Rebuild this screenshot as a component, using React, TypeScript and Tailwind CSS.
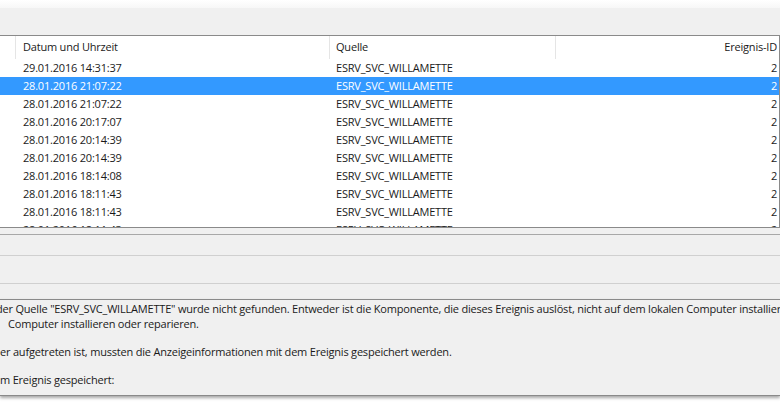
const rows = [
  '29.01.2016 14:31:37',
  '28.01.2016 21:07:22',
  '28.01.2016 21:07:22',
  '28.01.2016 20:17:07',
  '28.01.2016 20:14:39',
  '28.01.2016 20:14:39',
  '28.01.2016 18:14:08',
  '28.01.2016 18:11:43',
  '28.01.2016 18:11:43',
  '28.01.2016 18:11:43',
];

const SELECTED = 1;

export default function App() {
  return (
    <div className="w-[780px] h-[405px] overflow-hidden bg-white text-[11px] tracking-[-0.2px] text-[#1a1a1a] font-['Open_Sans',sans-serif]">
      {/* toolbar strip */}
      <div className="h-[8px] bg-gradient-to-b from-white to-[#f7f7f7]" />
      <div className="h-[27px] bg-[#f0f0f0]" />

      {/* event list */}
      <div className="border-t border-b border-r border-[#8a8a8a] bg-white">
        <div className="grid grid-cols-[16px_314px_226px_1fr] h-[23px] items-center">
          <div className="h-full border-r border-[#e5e5e5]" />
          <div className="h-full flex items-center pl-[7px] border-r border-[#e5e5e5]">Datum und Uhrzeit</div>
          <div className="h-full flex items-center pl-[6px] border-r border-[#e5e5e5]">Quelle</div>
          <div className="h-full flex items-center justify-end pr-[2px]">Ereignis-ID</div>
        </div>
        <div className="h-[168px] overflow-hidden">
          {rows.map((d, i) => {
            const sel = i === SELECTED;
            return (
              <div
                key={i}
                className={`grid grid-cols-[16px_314px_226px_1fr] h-[18px] items-center ${
                  sel ? 'bg-[#3399ff] text-white' : ''
                }`}
              >
                <div />
                <div className="pl-[7px]">{d}</div>
                <div className="pl-[6px]">ESRV_SVC_WILLAMETTE</div>
                <div className="text-right pr-[2px]">2</div>
              </div>
            );
          })}
        </div>
      </div>

      {/* tab / header bands */}
      <div className="h-[6px] bg-[#f0f0f0]" />
      <div className="h-[21px] bg-[#f0f0f0] border-t border-[#a8a8a8]" />
      <div className="h-[28px] bg-[#f0f0f0] border-t border-[#d0d0d0]" />
      <div className="h-[16px] bg-[#f0f0f0] border-t border-[#d0d0d0]" />

      {/* description */}
      <div className="h-[97px] bg-[#f0f0f0] border-t border-b border-[#8a8a8a] shadow-[0_2px_3px_rgba(0,0,0,0.35)] overflow-hidden whitespace-nowrap">
        <div className="h-[17px] leading-[17px] -ml-[4px]">
          der Quelle "ESRV_SVC_WILLAMETTE" wurde nicht gefunden. Entweder ist die Komponente, die dieses Ereignis auslöst, nicht auf dem lokalen Computer installiert, oder die Installation ist beschädigt.
        </div>
        <div className="h-[14px] leading-[14px] pl-[8px]">Computer installieren oder reparieren.</div>
        <div className="h-[14px]" />
        <div className="h-[14px] leading-[14px]">er aufgetreten ist, mussten die Anzeigeinformationen mit dem Ereignis gespeichert werden.</div>
        <div className="h-[14px]" />
        <div className="h-[14px] leading-[14px]">m Ereignis gespeichert:</div>
      </div>
    </div>
  );
}
